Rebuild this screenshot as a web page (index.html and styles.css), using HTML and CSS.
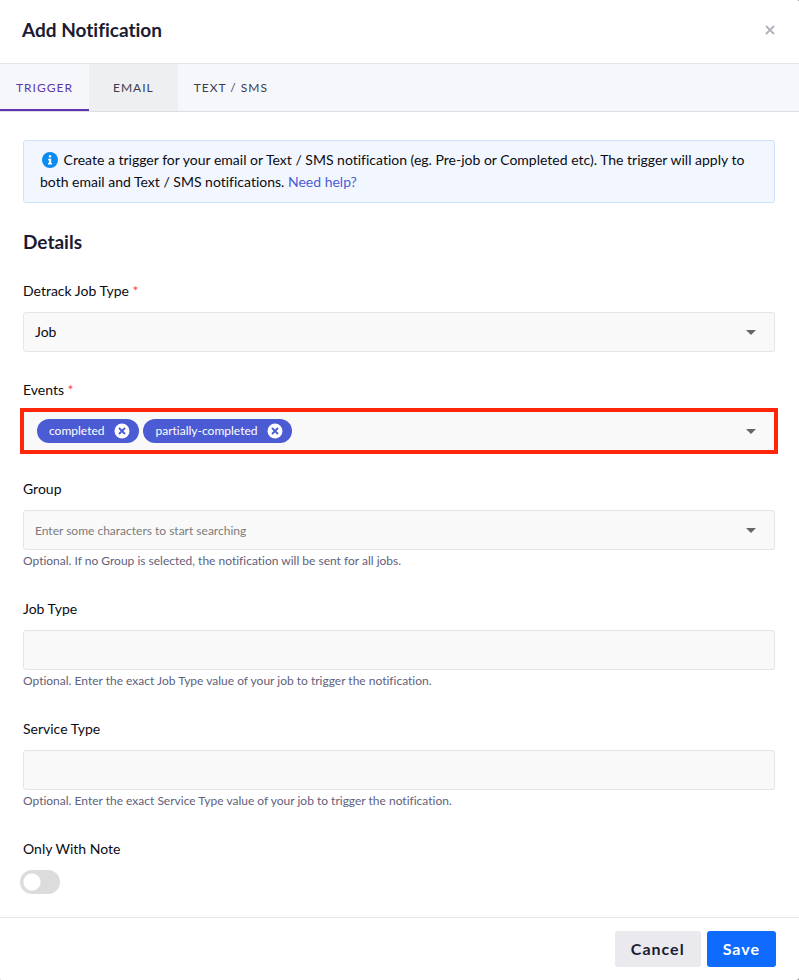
FILE: index.html
```
<!DOCTYPE html>
<html lang="en">
<head>
    <meta charset="UTF-8">
    <meta name="viewport" content="width=device-width, initial-scale=1.0">
    <title>Add Notification</title>
    <link rel="stylesheet" href="styles.css">
</head>
<body>
    <form class="modal">
        <header class="modal-header">
            <h1>Add Notification</h1>
            <button type="button" class="close" aria-label="Close">
                <svg width="10" height="10" viewBox="0 0 10 10"><path d="M1 1l8 8M9 1L1 9" stroke="#b1b1bb" stroke-width="1.8" fill="none"/></svg>
            </button>
        </header>

        <nav class="tabs">
            <button type="button" class="tab active">Trigger</button>
            <button type="button" class="tab hovered">Email</button>
            <button type="button" class="tab">Text / SMS</button>
        </nav>

        <main class="modal-body">
            <p class="alert">
                <svg class="info" width="16" height="16" viewBox="0 0 16 16"><circle cx="8" cy="8" r="8" fill="#0a8bf0"/><path d="M6.9 3.2h2.3v2.2H6.9zM6.2 6.7h3v4.2h.8v1.6H6v-1.6h.9V8.3h-.7z" fill="#fff"/></svg>
                Create a trigger for your email or Text / SMS notification (eg. Pre-job or Completed etc). The trigger will apply to both email and Text / SMS notifications. <a href="#">Need help?</a>
            </p>

            <h2>Details</h2>

            <div class="field">
                <label for="detrack-type">Detrack Job Type <span class="required">*</span></label>
                <div class="control">
                    <select id="detrack-type">
                        <option>Job</option>
                    </select>
                    <svg class="caret" width="10" height="5" viewBox="0 0 10 5"><path d="M0 0h10L5 5z" fill="#666"/></svg>
                </div>
            </div>

            <div class="field">
                <label for="events">Events <span class="required">*</span></label>
                <div class="control highlight">
                    <div class="chips">
                        <span class="chip">completed
                            <button type="button" aria-label="Remove completed">
                                <svg width="16" height="16" viewBox="0 0 16 16"><circle cx="8" cy="8" r="7.5" fill="#fff"/><path d="M5 5l6 6M11 5l-6 6" stroke="#4a5bd4" stroke-width="1.8"/></svg>
                            </button>
                        </span>
                        <span class="chip">partially-completed
                            <button type="button" aria-label="Remove partially-completed">
                                <svg width="16" height="16" viewBox="0 0 16 16"><circle cx="8" cy="8" r="7.5" fill="#fff"/><path d="M5 5l6 6M11 5l-6 6" stroke="#4a5bd4" stroke-width="1.8"/></svg>
                            </button>
                        </span>
                        <input type="text" id="events">
                    </div>
                    <svg class="caret" width="10" height="5" viewBox="0 0 10 5"><path d="M0 0h10L5 5z" fill="#666"/></svg>
                </div>
            </div>

            <div class="field">
                <label for="group">Group</label>
                <div class="control">
                    <input type="text" id="group" placeholder="Enter some characters to start searching">
                    <svg class="caret" width="10" height="5" viewBox="0 0 10 5"><path d="M0 0h10L5 5z" fill="#666"/></svg>
                </div>
                <p class="hint">Optional. If no Group is selected, the notification will be sent for all jobs.</p>
            </div>

            <div class="field">
                <label for="job-type">Job Type</label>
                <div class="control">
                    <input type="text" id="job-type">
                </div>
                <p class="hint">Optional. Enter the exact Job Type value of your job to trigger the notification.</p>
            </div>

            <div class="field">
                <label for="service-type">Service Type</label>
                <div class="control">
                    <input type="text" id="service-type">
                </div>
                <p class="hint">Optional. Enter the exact Service Type value of your job to trigger the notification.</p>
            </div>

            <div class="field">
                <label for="with-note">Only With Note</label>
                <input type="checkbox" class="switch" id="with-note">
            </div>
        </main>

        <footer class="modal-footer">
            <button type="button" class="btn cancel">Cancel</button>
            <button type="submit" class="btn save">Save</button>
        </footer>
    </form>
</body>
</html>
```
FILE: styles.css
```
* {
    box-sizing: border-box;
}
body {
    margin: 0;
    background: #888;
    color: #0b0b12;
    font-family: Lato, "Liberation Sans", sans-serif;
    font-size: 14px;
    line-height: 20px;
    font-variant-ligatures: none;
}
h1, h2, p {
    margin: 0;
}
button, input, select {
    font: inherit;
    color: inherit;
}
button {
    border: none;
    padding: 0;
    background: none;
    cursor: pointer;
}
svg {
    display: block;
}
.modal {
    display: flex;
    flex-direction: column;
    min-height: 100vh;
    border-radius: 0 2px 3px 1px;
    background: #fff;
}
.modal-header {
    display: flex;
    align-items: center;
    justify-content: space-between;
    padding: 18px 24px 21px 22px;
    border-bottom: 1px solid #e4e3ea;
}
h1, h2 {
    color: #1b1b33;
    font-size: 19px;
    font-weight: 700;
    line-height: 24px;
}

/* tabs */
.tabs {
    display: flex;
    background: #f6f7fa;
    border-bottom: 1px solid #dfdce3;
}
.tab {
    height: 47px;
    padding: 2px 16px 0;
    border-bottom: 2px solid transparent;
    color: #3c3c50;
    font-size: 12px;
    letter-spacing: 1px;
    text-transform: uppercase;
}
.tab.active {
    border-color: #5e35b1;
    color: #5e35b1;
}
.tab.hovered {
    padding: 2px 24px 0;
    background: #eeeff1;
}

/* body */
.modal-body {
    flex: 1;
    padding: 28px 24px 23px 23px;
}
.alert {
    padding: 8px 16px 9px;
    border: 1px solid #cfe2fd;
    border-radius: 3px;
    background: #f2f7ff;
    line-height: 22px;
}
.alert a {
    color: #4a5bd4;
    text-decoration: none;
}
.info {
    display: inline-block;
    margin: 0 2px;
    vertical-align: -3px;
}
h2 {
    margin: 27px 0;
}
.field {
    margin-bottom: 28px;
}
.field:last-child {
    margin-bottom: 0;
}
.field label {
    display: block;
    margin-bottom: 11px;
}
.required {
    color: #f44;
}
.control {
    display: grid;
    align-items: center;
    height: 40px;
    border: 1px solid #e4e4ea;
    border-radius: 3px;
    background: #f9f9f9;
}
.control > * {
    grid-area: 1 / 1;
}
.control select, .control input {
    width: 100%;
    height: 38px;
    padding: 0 11px;
    border: none;
    outline: none;
    background: none;
    appearance: none;
}
.control input {
    font-size: 12px;
}
.control input::placeholder {
    color: #7b7b7b;
}
.caret {
    justify-self: end;
    margin-right: 18px;
    pointer-events: none;
}
.highlight {
    outline: 4px solid #ff260a;
    outline-offset: -1px;
    border-radius: 0;
}
.chips {
    display: flex;
    gap: 4px;
    align-items: center;
    padding: 0 40px 0 13px;
}
.chips input {
    flex: 1;
    min-width: 0;
}
.chip {
    display: flex;
    align-items: center;
    gap: 10px;
    height: 24px;
    padding: 0 9px 0 12px;
    border-radius: 12px;
    background: #4a5bd4;
    color: #fff;
    font-size: 12px;
    white-space: nowrap;
}
.hint {
    margin-top: 1px;
    color: #5f617a;
    font-size: 12px;
}
.switch {
    display: block;
    width: 40px;
    height: 24px;
    margin: 0 0 0 -3px;
    border-radius: 12px;
    background: radial-gradient(circle at 12px 12px, #fff 8px, #dcdcdc 9px);
    appearance: none;
    cursor: pointer;
}
.switch:checked {
    background: radial-gradient(circle at 28px 12px, #fff 8px, #4a5bd4 9px);
}

/* footer */
.modal-footer {
    display: flex;
    justify-content: flex-end;
    gap: 6px;
    padding: 13px 23px;
    border-top: 1px solid #e6e6eb;
}
.btn {
    height: 36px;
    padding: 0 16px;
    border-radius: 3px;
    font-size: 16px;
    font-weight: 700;
    letter-spacing: 1px;
}
.cancel {
    background: #e9e9ee;
    color: #1b1b33;
}
.save {
    background: #0f6bfe;
    color: #fff;
}
```
